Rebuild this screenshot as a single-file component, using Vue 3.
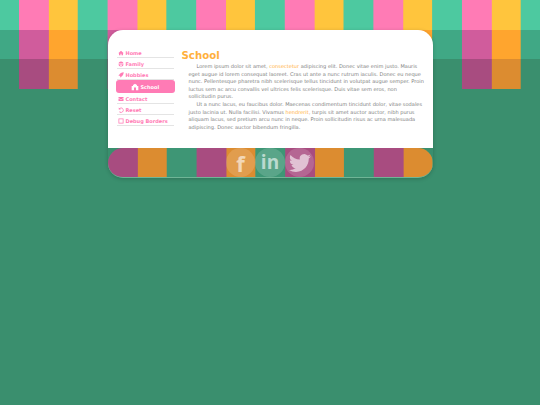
<script setup>
const nav = [
  { label: 'Home', icon: 'M12 3 1 13h3v8h6v-6h4v6h6v-8h3z' },
  { label: 'Family', icon: 'M12 2a10 10 0 1 0 0 20 10 10 0 0 0 0-20zM2 10h20v3H2zM7 15h10l-2 4H9z' },
  { label: 'Hobbies', icon: 'M23 1C14 2 8 5 5 11l-4 2 5 2 3 3 2 5 2-4c6-3 9-9 10-18z' },
  { label: 'School', icon: 'M12 2 6 6v3H2v13h7v-6a3 3 0 0 1 6 0v6h7V9h-4V6z', active: true },
  { label: 'Contact', icon: 'M2 4h20v4l-10 6L2 8zM2 10l10 6 10-6v10H2z' },
  { label: 'Reset', icon: 'M3 2v8h8L8 7a7 7 0 1 1-1 10l-2 3A10 10 0 1 0 6 5z' },
  { label: 'Debug Borders', icon: 'M2 2h20v20H2zM5 5v14h14V5z' }
]
</script>

<template>
  <div class="page">
    <div class="stripes" aria-hidden="true">
      <div class="band band-1"></div>
      <div class="band band-2"></div>
      <div class="band band-3"></div>
    </div>
    <div class="card">
      <div class="body">
        <ul class="nav">
          <li v-for="item in nav" :key="item.label" class="nav-item" :class="{ active: item.active }">
            <svg class="nav-icon" viewBox="0 0 24 24"><path :d="item.icon" fill-rule="evenodd" /></svg>
            <span>{{ item.label }}</span>
          </li>
        </ul>
        <div class="content">
          <h1>School</h1>
          <p>Lorem ipsum dolor sit amet, <a>consectetur</a> adipiscing elit. Donec vitae enim justo. Mauris eget augue id lorem consequat laoreet. Cras ut ante a nunc rutrum iaculis. Donec eu neque nunc. Pellentesque pharetra nibh scelerisque tellus tincidunt in volutpat augue semper. Proin luctus sem ac arcu convallis vel ultrices felis scelerisque. Duis vitae sem eros, non sollicitudin purus.</p>
          <p>Ut a nunc lacus, eu faucibus dolor. Maecenas condimentum tincidunt dolor, vitae sodales justo lacinia ut. Nulla facilisi. Vivamus <a>hendrerit</a>, turpis sit amet auctor auctor, nibh purus aliquam lacus, sed pretium arcu nunc in neque. Proin sollicitudin risus ac urna malesuada adipiscing. Donec auctor bibendum fringilla.</p>
        </div>
      </div>
      <div class="footer">
        <div class="social"><span class="fb">f</span></div>
        <div class="social"><span class="in">in</span></div>
        <div class="social">
          <svg class="bird" viewBox="0 0 24 24"><path d="M23.953 4.57a10 10 0 01-2.825.775 4.958 4.958 0 002.163-2.723c-.951.555-2.005.959-3.127 1.184a4.92 4.92 0 00-8.384 4.482C7.69 8.095 4.067 6.13 1.64 3.162a4.822 4.822 0 00-.666 2.475c0 1.71.87 3.213 2.188 4.096a4.904 4.904 0 01-2.228-.616v.06a4.923 4.923 0 003.946 4.827 4.996 4.996 0 01-2.212.085 4.936 4.936 0 004.604 3.417 9.867 9.867 0 01-6.102 2.105c-.39 0-.779-.023-1.17-.067a13.995 13.995 0 007.557 2.209c9.053 0 13.998-7.496 13.998-13.985 0-.21 0-.42-.015-.63A9.935 9.935 0 0024 4.59z" /></svg>
        </div>
      </div>
    </div>
  </div>
</template>

<style scoped>
.page {
  position: relative;
  min-height: 405px;
  padding-top: 30px;
  box-sizing: border-box;
  background: #3a8f6e;
  font-family: "DejaVu Sans", sans-serif;
  overflow: hidden;
}
.stripes {
  position: absolute;
  inset: 0 0 auto 0;
}
.band {
  height: 29.5px;
  background-position: 19px 0;
  background-size: 88.6px 100%;
}
.band-1 {
  background-color: #4dc9a0;
  background-image: linear-gradient(90deg, #ff7bb5 0 29.5px, #ffc53d 29.5px 59px, #4dc9a0 59px);
}
.band-2 {
  background-color: #40a885;
  background-image: linear-gradient(90deg, #d05c9c 0 29.5px, #ffa52e 29.5px 59px, #40a885 59px);
}
.band-3 {
  background-color: #3a8f6e;
  background-image: linear-gradient(90deg, #a84c80 0 29.5px, #dc8c30 29.5px 59px, #3a8f6e 59px);
}
.card {
  position: relative;
  width: 325px;
  margin: 0 auto;
  border-radius: 15px;
  box-shadow: 0 1px 4px rgba(0, 0, 0, 0.2);
}
.body {
  display: flex;
  height: 118px;
  box-sizing: border-box;
  padding: 16.5px 7px 0 8px;
  background: #fff;
  border-radius: 15px 15px 0 0;
}
.nav {
  flex: 0 0 59px;
  margin: 0;
  padding: 0;
  list-style: none;
}
.nav-item {
  display: flex;
  align-items: center;
  gap: 1.5px;
  height: 7px;
  margin: 0 1px;
  padding: 3px 0 0 1.5px;
  border-bottom: 1px solid #e4e4e4;
  color: #ff7bb5;
  font-size: 5px;
  font-weight: 700;
  white-space: nowrap;
}
.nav-item.active {
  justify-content: center;
  height: 12px;
  margin: 0;
  padding: 1px 0 0;
  border-bottom: 0;
  border-radius: 3px;
  background: #ff7bb5;
  color: #fff;
}
.nav-icon {
  width: 6px;
  height: 6px;
  fill: currentColor;
}
.active .nav-icon {
  width: 8px;
  height: 8px;
}
.content {
  flex: 1;
  margin-left: 7px;
  padding-top: 1.5px;
}
h1 {
  margin: 0;
  color: #ffb03b;
  font-size: 10.2px;
  font-weight: 700;
  line-height: 15px;
}
p {
  margin: 0 0 0 7px;
  color: #808080;
  font-size: 5.05px;
  line-height: 7.6px;
  text-indent: 8px;
}
a {
  color: #ffb03b;
}
.footer {
  display: flex;
  justify-content: center;
  height: 30px;
  box-sizing: border-box;
  border-radius: 15px;
  border-bottom: 1px solid #6fb596;
  background-color: #3e9675;
  background-image: linear-gradient(90deg, #a84c80 0 29.5px, #dc8c30 29.5px 59px, #3e9675 59px);
  background-size: 88.6px 100%;
}
.social {
  display: flex;
  align-items: center;
  justify-content: center;
  width: 29.5px;
  height: 29px;
  border-radius: 50%;
  background: rgba(255, 255, 255, 0.15);
  color: rgba(255, 255, 255, 0.6);
  font-family: "Open Sans", sans-serif;
  font-weight: 700;
}
.fb {
  font-size: 22px;
  line-height: 1;
}
.in {
  font-size: 19px;
  line-height: 1;
}
.bird {
  width: 22px;
  height: 22px;
  fill: rgba(255, 255, 255, 0.6);
}
</style>
